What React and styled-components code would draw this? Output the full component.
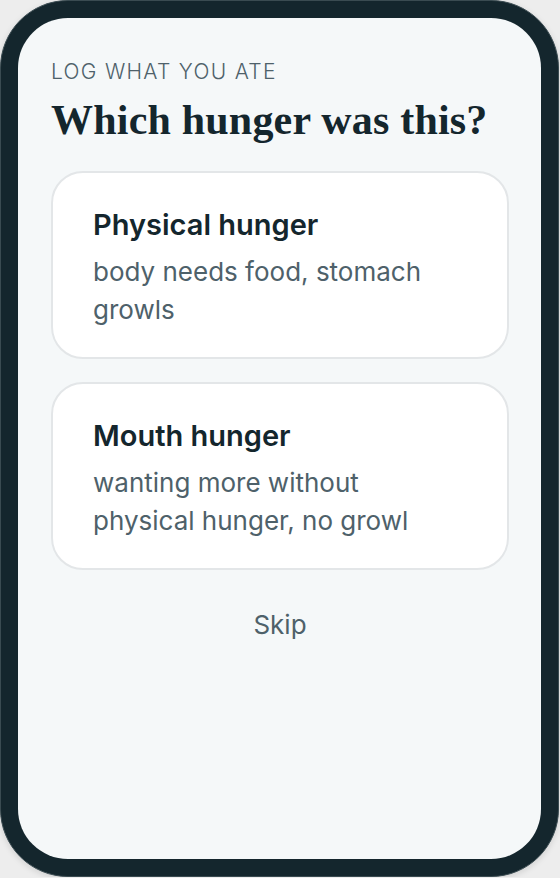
import styled, { createGlobalStyle } from 'styled-components'

const GlobalStyle = createGlobalStyle`
  html, body {
    margin: 0;
    padding: 0;
    background: #ededed;
  }
  * {
    box-sizing: border-box;
  }
`

const Device = styled.div`
  width: 559px;
  height: 877px;
  padding: 17px;
  border-radius: 68px;
  background: #14262d;
  border: 1px solid #3a4b51;
  box-shadow: 0 2px 6px rgba(0, 0, 0, 0.12);
`

const Screen = styled.div`
  height: 100%;
  border-radius: 50px;
  background: #f5f8f9;
  padding: 42px 32px 0 33px;
  display: flex;
  flex-direction: column;
`

const Eyebrow = styled.div`
  font-family: 'Inter', 'Liberation Sans', sans-serif;
  font-weight: 300;
  font-size: 21px;
  letter-spacing: 1.3px;
  color: #4e616a;
  text-transform: uppercase;
  line-height: 24px;
`

const Heading = styled.h1`
  margin: 11px 0 26px;
  font-family: 'Liberation Serif', 'DejaVu Serif', serif;
  font-weight: 600;
  font-size: 42px;
  line-height: 50px;
  letter-spacing: 0.2px;
  color: #14262d;
`

const Options = styled.div`
  display: flex;
  flex-direction: column;
  gap: 23px;
`

const OptionCard = styled.button`
  display: flex;
  flex-direction: column;
  align-items: flex-start;
  gap: 10px;
  width: 100%;
  padding: 34px 52px 28px 40px;
  border: 2px solid #e3e6e8;
  border-radius: 32px;
  background: #ffffff;
  text-align: left;
  cursor: pointer;
`

const OptionTitle = styled.span`
  font-family: 'Inter', 'Liberation Sans', sans-serif;
  font-weight: 600;
  font-size: 29px;
  line-height: 36px;
  color: #14262d;
`

const OptionText = styled.span`
  font-family: 'Inter', 'Liberation Sans', sans-serif;
  font-size: 26px;
  line-height: 38px;
  color: #4e616a;
`

const SkipButton = styled.button`
  align-self: center;
  margin-top: 39px;
  border: none;
  background: none;
  padding: 0;
  font-family: 'Inter', 'Liberation Sans', sans-serif;
  font-size: 26px;
  line-height: 32px;
  color: #4e616a;
  cursor: pointer;
`

const options = [
  { id: 'physical', title: 'Physical hunger', text: 'body needs food, stomach growls' },
  { id: 'mouth', title: 'Mouth hunger', text: 'wanting more without physical hunger, no growl' },
]

function App() {
  return (
    <>
      <GlobalStyle />
      <Device>
        <Screen>
          <Eyebrow>Log what you ate</Eyebrow>
          <Heading>Which hunger was this?</Heading>
          <Options>
            {options.map((o) => (
              <OptionCard key={o.id}>
                <OptionTitle>{o.title}</OptionTitle>
                <OptionText>{o.text}</OptionText>
              </OptionCard>
            ))}
          </Options>
          <SkipButton>Skip</SkipButton>
        </Screen>
      </Device>
    </>
  )
}

export default App
